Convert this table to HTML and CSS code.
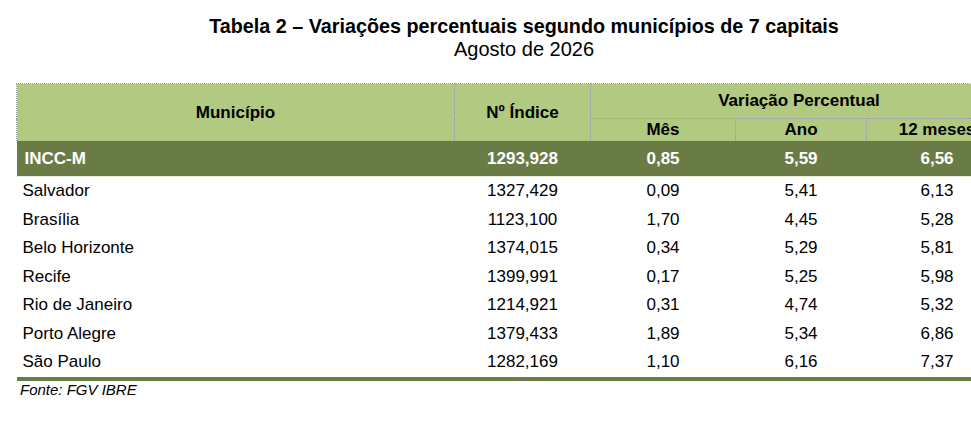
FILE: index.html
```html
<!DOCTYPE html>
<html lang="pt-BR">
<head>
<meta charset="utf-8">
<title>Tabela 2</title>
<link rel="stylesheet" href="styles.css">
</head>
<body>
<div class="page">
  <header class="caption">
    <div class="caption-title">Tabela 2 – Variações percentuais segundo municípios de 7 capitais</div>
    <div class="caption-sub">Agosto de 2026</div>
  </header>
  <table class="data">
    <colgroup>
      <col class="c-mun"><col class="c-idx"><col class="c-mes"><col class="c-ano"><col class="c-12">
    </colgroup>
    <thead>
      <tr class="h1">
        <th rowspan="2" class="first">Município</th>
        <th rowspan="2">Nº Índice</th>
        <th colspan="3">Variação Percentual</th>
      </tr>
      <tr class="h2">
        <th>Mês</th>
        <th>Ano</th>
        <th>12 meses</th>
      </tr>
    </thead>
    <tbody>
      <tr class="total">
        <td class="name">INCC-M</td><td>1293,928</td><td>0,85</td><td>5,59</td><td>6,56</td>
      </tr>
      <tr><td class="name">Salvador</td><td>1327,429</td><td>0,09</td><td>5,41</td><td>6,13</td></tr>
      <tr><td class="name">Brasília</td><td>1123,100</td><td>1,70</td><td>4,45</td><td>5,28</td></tr>
      <tr><td class="name">Belo Horizonte</td><td>1374,015</td><td>0,34</td><td>5,29</td><td>5,81</td></tr>
      <tr><td class="name">Recife</td><td>1399,991</td><td>0,17</td><td>5,25</td><td>5,98</td></tr>
      <tr><td class="name">Rio de Janeiro</td><td>1214,921</td><td>0,31</td><td>4,74</td><td>5,32</td></tr>
      <tr><td class="name">Porto Alegre</td><td>1379,433</td><td>1,89</td><td>5,34</td><td>6,86</td></tr>
      <tr class="last"><td class="name">São Paulo</td><td>1282,169</td><td>1,10</td><td>6,16</td><td>7,37</td></tr>
    </tbody>
  </table>
  <div class="source">Fonte: FGV IBRE</div>
</div>
</body>
</html>
```

FILE: styles.css
```css
html, body {
  margin: 0;
  padding: 0;
  overflow: hidden;
  background: #ffffff;
}

.page {
  width: 1100px;
  padding-top: 15px;
  font-family: "Liberation Sans", Arial, sans-serif;
  color: #000;
}

.caption {
  width: 1032px;
  padding-left: 8px;
  text-align: center;
  font-family: "Liberation Sans", Arial, sans-serif;
  font-size: 20px;
  line-height: 23px;
}

.caption-title {
  font-weight: bold;
  font-size: 19.75px;
}

.data {
  margin-top: 22px;
  margin-left: 16px;
  width: 991px;
  table-layout: fixed;
  border-collapse: collapse;
  font-size: 17px;
}

.c-mun { width: 438px; }
.c-idx { width: 136px; }
.c-mes { width: 145px; }
.c-ano { width: 131px; }
.c-12 { width: 141px; }

.data th {
  background: #b2c981;
  font-weight: bold;
  text-align: center;
  vertical-align: middle;
  padding: 0;
  border: 1px dotted #9a9a9a;
  border-bottom: none;
}

.data th.first {
  border-left: 1px dotted #9a9a9a;
}

.h1 th { height: 34px; }
.h2 th { height: 22px; }

.data td {
  padding: 0;
  text-align: center;
  vertical-align: middle;
  height: 28.5px;
}

.data td.name {
  text-align: left;
  padding-left: 6px;
}

.total td {
  background: #6a7c46;
  color: #ffffff;
  font-weight: bold;
  height: 35px;
  border-bottom: 1px solid #e6eddb;
}

.total td.name {
  padding-left: 8px;
}

.last td {
  border-bottom: 4px solid #6a7c46;
  box-shadow: 0 1px 0 #b9c4a0;
}

.source {
  margin-left: 20px;
  margin-top: 0;
  font-style: italic;
  font-size: 15px;
  line-height: 17px;
}
```
